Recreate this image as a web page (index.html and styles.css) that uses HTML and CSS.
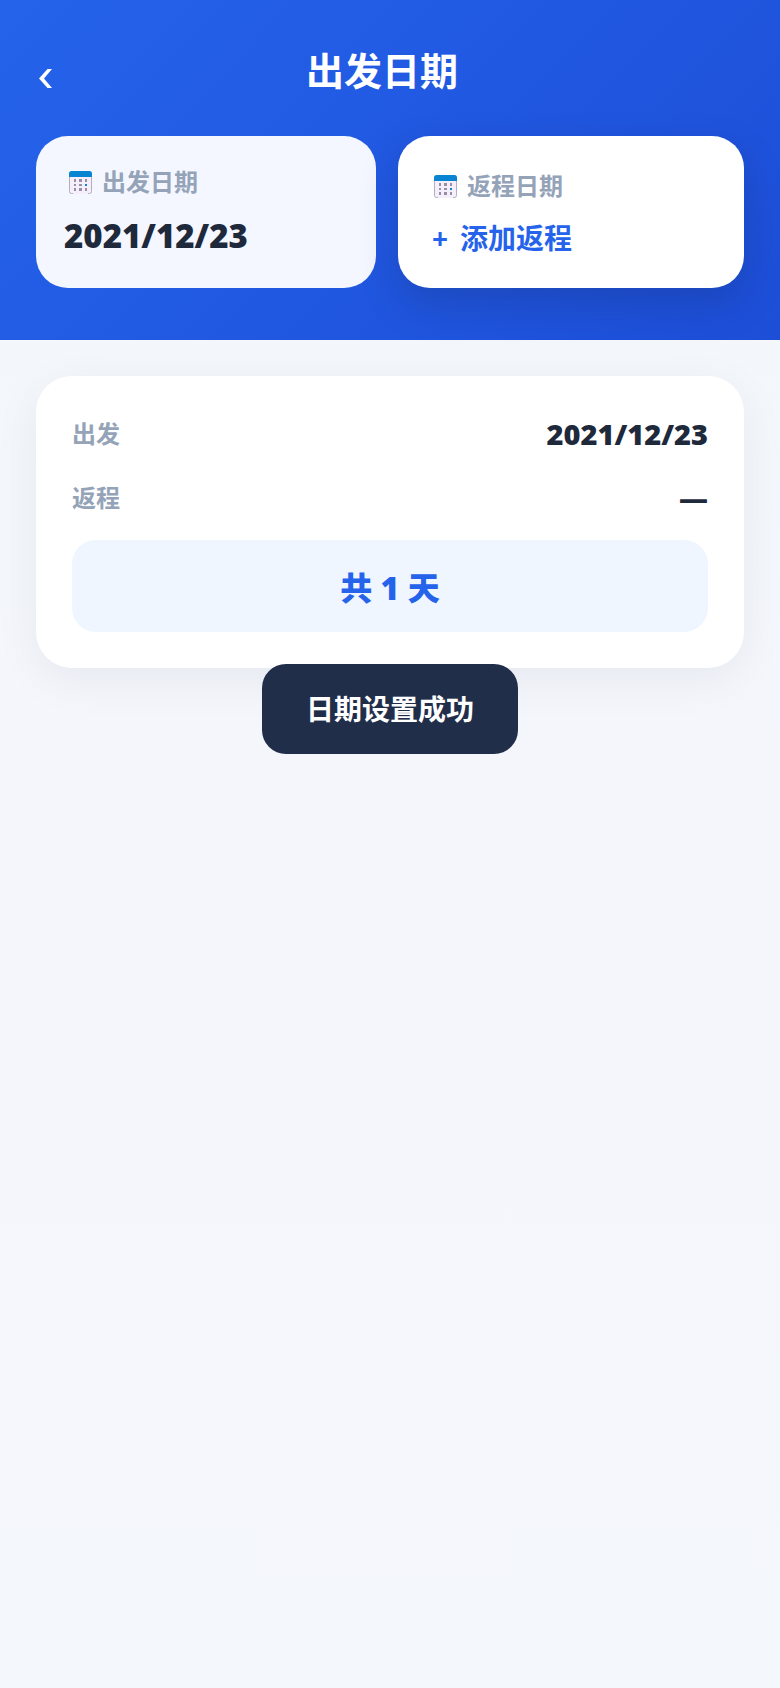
FILE: index.html
```html
<!DOCTYPE html>
<html lang="zh-CN">
  <head>
    <meta charset="UTF-8" />
    <meta name="viewport" content="width=device-width, initial-scale=1.0" />
    <title>出发日期</title>
    <link rel="stylesheet" href="styles.css">
  </head>
  <body>
    <!-- Calendar icon shared by both date cards -->
    <svg class="sprite" aria-hidden="true">
      <symbol id="calendar" viewBox="0 0 23 23">
        <path d="M.5 5h22v15.5a2 2 0 0 1-2 2h-18a2 2 0 0 1-2-2z" fill="#f4effa" stroke="#b5adc0" />
        <path d="M4 22.5h15" stroke="#f4effa" />
        <path d="M0 6V2.500Q0 0 2.500 0h18Q23 0 23 2.500V6z" fill="#0984d3" />
        <path d="M5 8h2v3H5zM10 8h3v3h-3zM16 8h2v3h-2zM5 13h2v2H5zM10 13h3v2h-3zM5 17h2v3H5zM10 17h3v3h-3zM16 17h2v3h-2z" fill="#998fa5" />
        <path d="M16 13h2v2h-2z" fill="#0984d3" />
      </symbol>
    </svg>

    <header class="header">
      <div class="nav">
        <button class="back" type="button" aria-label="返回">
          <svg width="13" height="19" viewBox="0 0 13 19"><path d="M13 0H8.500L0 9.500 8.500 19H13L5 9.500z" fill="#fff" /></svg>
        </button>
        <h1>出发日期</h1>
      </div>
      <div class="dates">
        <button class="date-card" type="button">
          <span class="date-label"><svg class="icon"><use href="#calendar" /></svg>出发日期</span>
          <span class="date-value">2021/12/23</span>
        </button>
        <button class="date-card active" type="button">
          <span class="date-label"><svg class="icon"><use href="#calendar" /></svg>返程日期</span>
          <span class="date-add"><span class="plus">+</span>添加返程</span>
        </button>
      </div>
    </header>

    <main class="summary">
      <div class="row">
        <span class="row-label">出发</span>
        <span class="row-value">2021/12/23</span>
      </div>
      <div class="row">
        <span class="row-label">返程</span>
        <span class="row-value">—</span>
      </div>
      <div class="total">共 1 天</div>
    </main>

    <div class="toast" role="status">日期设置成功</div>
  </body>
</html>
```

FILE: styles.css
```css
* {
  box-sizing: border-box;
}

body {
  margin: 0;
  min-height: 100vh;
  background: linear-gradient(180deg, #f3f8fc, #f4f6fc 50%, #f4f7fc);
  color: #1e293b;
  font-family: "Open Sans", "Noto Sans CJK SC", sans-serif;
}

button {
  border: 0;
  font-family: inherit;
  color: inherit;
  text-align: left;
  cursor: pointer;
}

.sprite {
  position: absolute;
  width: 0;
  height: 0;
}

/* Header */
.header {
  padding: 44px 36px 52px;
  background: linear-gradient(135deg, #2563eb, #1d4ed8);
}

.nav {
  display: grid;
  grid-template-columns: 56px 1fr 72px;
  align-items: center;
  margin-bottom: 40px;
}

.nav h1 {
  margin: 0;
  font-size: 38px;
  line-height: 52px;
  font-weight: 700;
  text-align: center;
  color: #fff;
}

.back {
  display: flex;
  padding: 16px 3px 0;
  background: none;
}

/* Date cards */
.dates {
  display: flex;
  gap: 22px;
}

.date-card {
  box-sizing: content-box;
  flex: 1;
  display: flex;
  flex-direction: column;
  justify-content: flex-start;
  gap: 16px;
  padding: 28px 28px 32px;
  border-radius: 32px;
  background: #f4f7ff;
}

.date-card.active {
  padding: 32px 31px 28px;
  background: #fff;
  box-shadow: 0 16px 40px rgba(15, 23, 42, 0.18);
}

.date-label {
  display: flex;
  align-items: center;
  gap: 10px;
  padding-left: 5px;
  font-size: 24px;
  line-height: 36px;
  font-weight: 700;
  color: #94a3b8;
}

.icon {
  width: 23px;
  height: 23px;
}

.date-value {
  font-size: 33px;
  line-height: 40px;
  font-weight: 800;
}

.date-add {
  display: flex;
  align-items: center;
  gap: 12px;
  padding-left: 3px;
  font-size: 28px;
  line-height: 36px;
  font-weight: 700;
  color: #2563eb;
}

/* Trip summary */
.summary {
  display: flex;
  flex-direction: column;
  gap: 20px;
  margin: 36px;
  padding: 36px;
  border-radius: 36px;
  background: #fff;
  box-shadow: 0 12px 48px rgba(15, 23, 42, 0.06);
}

.row {
  display: flex;
  justify-content: space-between;
  line-height: 44px;
}

.row-label {
  font-size: 24px;
  font-weight: 700;
  color: #94a3b8;
}

.row-value {
  font-size: 29px;
  font-weight: 800;
}

.total {
  padding: 26px 24px 22px;
  border-radius: 24px;
  background: #eff6ff;
  font-size: 32px;
  line-height: 44px;
  font-weight: 800;
  text-align: center;
  color: #2563eb;
}

/* Toast over the page */
.toast {
  position: fixed;
  top: 42%;
  left: 50%;
  transform: translate(-50%, -50%);
  padding: 24px 44px;
  border-radius: 24px;
  background: #212e4a;
  font-size: 28px;
  line-height: 42px;
  font-weight: 700;
  white-space: nowrap;
  color: #fff;
}
```
